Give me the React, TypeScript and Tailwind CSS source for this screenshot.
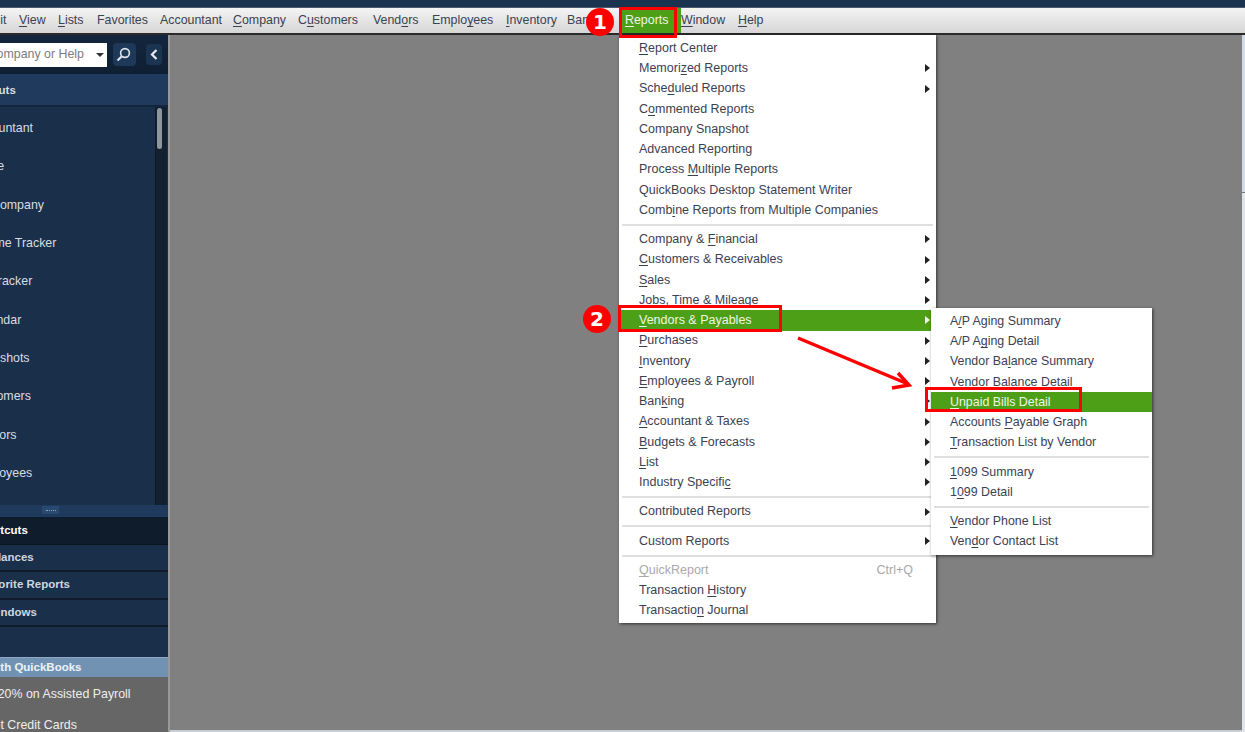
import React from "react";

function Amp({ t }: { t: string }) {
  const i = t.indexOf("_");
  if (i < 0) return <>{t}</>;
  return (
    <>
      {t.slice(0, i)}
      <span className="underline underline-offset-2 decoration-1">{t[i + 1]}</span>
      {t.slice(i + 2)}
    </>
  );
}

const bar: [string, string][] = [
  ["_View", "w-[39px]"],
  ["_Lists", "w-[39px]"],
  ["Favorites", "w-[63px]"],
  ["Accountant", "w-[73px]"],
  ["_Company", "w-[65px]"],
  ["C_ustomers", "w-[75px]"],
  ["Vend_ors", "w-[59px]"],
  ["Emplo_yees", "w-[74px]"],
  ["_Inventory", "w-[61px]"],
  ["Ban_king", "w-[55px]"],
];

type Row = { t?: string; sub?: boolean; on?: boolean; off?: boolean; key2?: string; sep?: boolean };

const main: Row[] = [
  { t: "_Report Center" },
  { t: "Memori_zed Reports", sub: true },
  { t: "Sche_duled Reports", sub: true },
  { t: "C_ommented Reports" },
  { t: "Company Snapshot" },
  { t: "Advanced Reporting" },
  { t: "Process _Multiple Reports" },
  { t: "QuickBooks Desktop Statement Writer" },
  { t: "Comb_ine Reports from Multiple Companies" },
  { sep: true },
  { t: "Company & _Financial", sub: true },
  { t: "_Customers & Receivables", sub: true },
  { t: "_Sales", sub: true },
  { t: "_Jobs, Time & Mileage", sub: true },
  { t: "_Vendors & Payables", sub: true, on: true },
  { t: "_Purchases", sub: true },
  { t: "_Inventory", sub: true },
  { t: "_Employees & Payroll", sub: true },
  { t: "Ban_king", sub: true },
  { t: "_Accountant & Taxes", sub: true },
  { t: "_Budgets & Forecasts", sub: true },
  { t: "_List", sub: true },
  { t: "Industry Specifi_c", sub: true },
  { sep: true },
  { t: "Contributed Reports", sub: true },
  { sep: true },
  { t: "Custom Reports", sub: true },
  { sep: true },
  { t: "_QuickReport", off: true, key2: "Ctrl+Q" },
  { t: "Transaction _History" },
  { t: "Transactio_n Journal" },
];

const subm: Row[] = [
  { t: "A_/P Aging Summary" },
  { t: "A/P A_ging Detail" },
  { t: "Vendor Ba_lance Summary" },
  { t: "Vendor Balance Detail" },
  { t: "_Unpaid Bills Detail", on: true },
  { t: "Accounts _Payable Graph" },
  { t: "_Transaction List by Vendor" },
  { sep: true },
  { t: "_1099 Summary" },
  { t: "1_099 Detail" },
  { sep: true },
  { t: "_Vendor Phone List" },
  { t: "Ven_dor Contact List" },
];

function Menu({ rows, pad }: { rows: Row[]; pad: string }) {
  return (
    <div className="pt-[3px] pb-[3px]">
      {rows.map((r, i) =>
        r.sep ? (
          <div key={i} className="h-[9px] flex items-center px-[3px]">
            <div className="h-[2px] w-full bg-[#dfdfdf]" />
          </div>
        ) : (
          <div
            key={i}
            className={
              "h-[20.25px] flex items-center pr-[6px] relative " +
              pad +
              " " +
              (r.on ? "bg-[#4e9f18] text-[#eef6e6] " : r.off ? "text-[#a9a9a9] " : "text-[#3c4152] ")
            }
          >
            <span className="flex-1 whitespace-nowrap"><Amp t={r.t!} /></span>
            {r.key2 && <span className="mr-[17px]">{r.key2}</span>}
            {r.sub && (
              <span
                className={
                  "w-0 h-0 border-y-[4px] border-y-transparent border-l-[5px] " +
                  (r.on ? "border-l-[#eef6e6]" : "border-l-[#222222]")
                }
              />
            )}
          </div>
        )
      )}
    </div>
  );
}

const items = ["Accountant", "Home", "My Company", "Income Tracker", "Bill Tracker", "Calendar", "Snapshots", "Customers", "Vendors", "Employees"];

function Badge({ n, cls }: { n: string; cls: string }) {
  return (
    <div
      className={
        "absolute w-[28px] h-[28px] rounded-full bg-[#ff0000] text-white font-bold text-[20px] flex items-center justify-center font-['DejaVu_Sans',sans-serif] " +
        cls
      }
    >
      {n}
    </div>
  );
}

export default function App() {
  return (
    <div className="relative w-[1245px] h-[732px] overflow-hidden flex flex-col bg-[#808080] font-['Liberation_Sans',Arial,sans-serif] text-[12.4px] leading-none">
      <div className="h-[8px] shrink-0 bg-[#1a334f] border-b border-[#4a5a6c]" />
      <div className="h-[25px] shrink-0 flex items-center bg-gradient-to-b from-[#f4f4f4] to-[#d6d6d6] text-[#3c4152] overflow-hidden">
        <span className="-ml-[15px] w-[34px] shrink-0 whitespace-nowrap">Edit</span>
        {bar.map(([t, w]) => (
          <span key={t} className={w + " shrink-0 whitespace-nowrap"}><Amp t={t} /></span>
        ))}
        <span className="w-[59px] shrink-0 h-full flex items-center pl-[3px] bg-[#4e9f18] text-[#eef6e6]"><Amp t="_Reports" /></span>
        <span className="w-[57px] shrink-0"><Amp t="_Window" /></span>
        <span className="shrink-0"><Amp t="_Help" /></span>
      </div>
      <div className="h-[2px] shrink-0 bg-[#2a2a2a]" />
      <div className="flex-1 min-h-0 flex">
        <aside className="w-[168px] shrink-0 flex flex-col bg-[#1a2f4a] text-[#d8dde4] overflow-hidden">
          <div className="h-[39px] shrink-0 flex items-center bg-gradient-to-b from-[#13263d] to-[#0f2034]">
            <div className="w-[107px] h-[24px] shrink-0 bg-white flex items-center justify-end pr-[3px] overflow-hidden relative">
              <span className="absolute right-[23px] whitespace-nowrap text-[#7d7d7d]">Search Company or Help</span>
              <span className="w-0 h-0 border-x-[4px] border-x-transparent border-t-[4px] border-t-[#333333]" />
            </div>
            <div className="ml-[6px] w-[23px] h-[23px] bg-[#1d3858] rounded-sm flex items-center justify-center pr-[2px]">
              <svg width="15" height="15" viewBox="0 0 15 15" fill="none" stroke="#dfe4ea" strokeWidth="1.6">
                <circle cx="9" cy="6" r="4.4" />
                <path d="M5.8 9.2 1.5 13.5" strokeWidth="2" />
              </svg>
            </div>
            <div className="ml-[10px] w-[16px] h-[21px] bg-[#1a3452] rounded-sm flex items-center justify-center">
              <svg width="8" height="11" viewBox="0 0 8 11" fill="none" stroke="#e8ecf0" strokeWidth="2.2">
                <path d="M6.5 1 2 5.5 6.5 10" />
              </svg>
            </div>
          </div>
          <div className="h-[33px] shrink-0 flex items-center pt-[2px] bg-[#1f3a5c] border-b-2 border-[#13263d] font-bold text-[11.5px]">
            <span className="-ml-[57px] whitespace-nowrap">My Shortcuts</span>
          </div>
          <div className="h-[398px] shrink-0 flex">
            <div className="flex-1 flex flex-col pt-[2px] overflow-hidden">
              {items.map((t) => (
                <div key={t} className="h-[38.35px] shrink-0 flex items-center">
                  <span className="-ml-[29px] whitespace-nowrap">{t}</span>
                </div>
              ))}
            </div>
            <div className="w-[12px] shrink-0 mr-px bg-[#13202f] border-l border-[#0e1a28] pl-[1px] pt-[1px]">
              <div className="w-[5px] h-[41px] rounded-sm bg-[#8d959e]" />
            </div>
          </div>
          <div className="h-[12px] shrink-0 flex justify-center pr-[67px] pt-[1px] bg-[#1f3a5c]">
            <div className="w-[17px] h-[8px] bg-[#284a70] flex items-center justify-center">
              <span className="block w-[10px] h-px border-t border-dotted border-[#8fa3b8]" />
            </div>
          </div>
          <div className="h-[28px] shrink-0 flex items-center bg-[#0f1c2b] border-b border-[#0b1522] font-bold text-[11.5px] text-white">
            <span className="-ml-[45px] whitespace-nowrap">My Shortcuts</span>
          </div>
          {["View Balances", "Run Favorite Reports", "Open Windows"].map((t, i) => (
            <div key={t} className="h-[27.33px] shrink-0 flex items-center bg-[#1a2f4a] border-b-2 border-[#0f1c2b] font-bold text-[11.5px] text-[#d0d6de]">
              <span className={(i === 1 ? "-ml-[47px]" : "-ml-[46px]") + " whitespace-nowrap"}>{t}</span>
            </div>
          ))}
          <div className="h-[30px] shrink-0" />
          <div className="h-[20px] shrink-0 flex items-center bg-[#7192b3] border-t border-[#8fa9c4] font-bold text-[11.5px] text-[#eef2f6]">
            <span className="-ml-[61px] whitespace-nowrap">Do More with QuickBooks</span>
          </div>
          <div className="flex-1 bg-[#666666] text-[#eeeeee] flex flex-col pt-[11px]">
            <span className="-ml-[34px] h-[31px] shrink-0 whitespace-nowrap">Save 20% on Assisted Payroll</span>
            <span className="-ml-[34px] whitespace-nowrap">Accept Credit Cards</span>
          </div>
        </aside>
        <div className="w-[2px] shrink-0 bg-[#9a9a9a]" />
        <div className="flex-1 flex flex-col">
          <div className="flex-1" />
          <div className="h-[2px] bg-[#c8ccd4]" />
        </div>
        <div className="w-[3px] shrink-0 flex flex-col">
          <div className="h-[157px] bg-[#d3dbe8]" />
          <div className="flex-1 bg-[#e2e3e8] border-t border-[#777777]" />
        </div>
      </div>

      <div className="absolute left-[619px] top-[35px] w-[317px] h-[588px] bg-white text-[12.5px] shadow-[1px_1px_3px_rgba(0,0,0,0.6)]">
        <Menu rows={main} pad="pl-[20px]" />
      </div>
      <div className="absolute left-[931px] top-[308px] w-[221px] bg-white shadow-[1px_1px_3px_rgba(0,0,0,0.6)]">
        <Menu rows={subm} pad="pl-[19px]" />
      </div>

      <div className="absolute left-[619px] top-[7px] w-[58px] h-[31px] border-[3px] border-[#ff0000]" />
      <div className="absolute left-[618px] top-[305px] w-[164px] h-[27px] border-[3px] border-[#ff0000]" />
      <div className="absolute left-[925px] top-[387px] w-[157px] h-[25px] border-[3px] border-[#ff0000]" />
      <Badge n="1" cls="left-[586px] top-[8px]" />
      <Badge n="2" cls="left-[583px] top-[305px]" />
      <svg className="absolute left-[790px] top-[330px]" width="130" height="65" viewBox="0 0 130 65" fill="none" stroke="#ff0000" strokeWidth="3.5">
        <path d="M8 8 118 54" />
        <path d="M108 43 119 55 102 58" />
      </svg>
    </div>
  );
}
